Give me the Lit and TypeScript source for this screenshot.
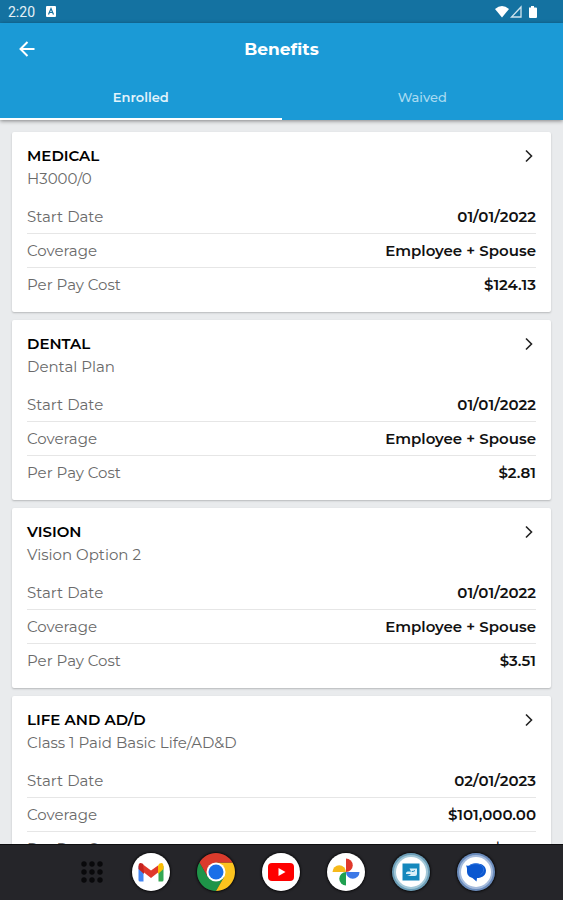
import { LitElement, html, css, svg } from "lit";
import { customElement, property, state } from "lit/decorators.js";
import { classMap } from "lit/directives/class-map.js";

interface Plan {
  title: string;
  subtitle: string;
  rows: [string, string][];
}

const plans: Plan[] = [
  {
    title: "MEDICAL",
    subtitle: "H3000/0",
    rows: [["Start Date", "01/01/2022"], ["Coverage", "Employee + Spouse"], ["Per Pay Cost", "$124.13"]],
  },
  {
    title: "DENTAL",
    subtitle: "Dental Plan",
    rows: [["Start Date", "01/01/2022"], ["Coverage", "Employee + Spouse"], ["Per Pay Cost", "$2.81"]],
  },
  {
    title: "VISION",
    subtitle: "Vision Option 2",
    rows: [["Start Date", "01/01/2022"], ["Coverage", "Employee + Spouse"], ["Per Pay Cost", "$3.51"]],
  },
  {
    title: "LIFE AND AD/D",
    subtitle: "Class 1 Paid Basic Life/AD&D",
    rows: [["Start Date", "02/01/2023"], ["Coverage", "$101,000.00"], ["Per Pay Cost", "$0.00"]],
  },
];

const apps = [
  {
    name: "Gmail",
    icon: svg`
      <circle cx="19" cy="19" r="19" fill="#fff"/>
      <path d="M6.500 13v14q0 1.500 1.500 1.500H11.500V17z" fill="#4285f4"/>
      <path d="M31.500 13v14q0 1.500-1.500 1.500H26.500V17z" fill="#34a853"/>
      <path d="M26 12.500l1.500-2q4-2 4 3V16l-5.500 5z" fill="#fbbc04"/>
      <path d="M6.500 16v-2.500q0-5 4-3l1.500 2V21z" fill="#c5221f"/>
      <path d="M11 11.500l8 6 7-5V19.500l-7 5.500-7-5.500z" fill="#e0382b"/>`,
  },
  {
    name: "Chrome",
    icon: svg`
      <path d="M2.550 9.500A19 19 0 0 0 19 38L27.230 23.750 19 28.500 10.770 23.750z" fill="#1e9448"/>
      <path d="M35.450 9.500A19 19 0 0 1 19 38L27.230 23.750 19 9.500z" fill="#fcc31e"/>
      <path d="M2.550 9.500A19 19 0 0 1 35.450 9.500H19L10.770 23.750z" fill="#db3b2c"/>
      <circle cx="19" cy="19" r="9.500" fill="#fff"/>
      <circle cx="19" cy="19" r="7.500" fill="#1a6fe8"/>`,
  },
  {
    name: "YouTube",
    icon: svg`
      <circle cx="19" cy="19" r="19" fill="#fff"/>
      <rect x="6" y="10" width="26" height="18" rx="4" fill="#fe0000"/>
      <path d="M16.500 15l7 4-7 4z" fill="#fff"/>`,
  },
  {
    name: "Photos",
    icon: svg`
      <circle cx="19" cy="19" r="19" fill="#fff"/>
      <path d="M19 5.500a6.750 6.750 0 0 1 0 13.500z" fill="#e0382b"/>
      <path d="M32.500 19a6.750 6.750 0 0 1-13.500 0z" fill="#3b78e7"/>
      <path d="M19 32.500a6.750 6.750 0 0 1 0-13.500z" fill="#1fa050"/>
      <path d="M5.500 19a6.750 6.750 0 0 1 13.500 0z" fill="#f6b91a"/>`,
  },
  {
    name: "Benefits",
    icon: svg`
      <circle cx="19" cy="19" r="19" fill="#6d9fb8"/>
      <circle cx="19" cy="19" r="17" fill="#a3c8d8"/>
      <circle cx="19" cy="19" r="15" fill="#fff"/>
      <rect x="10.500" y="10.500" width="17" height="17" fill="#1488bd"/>
      <path d="M17.500 15.500H25V21q0 2-2 2h-8q3-.5 4-2h-5q-.5-2 1.500-2.500h5q-2.500-.5-3-3z" fill="#d9eff8"/>
      <path d="M20 18.500q2 0 3-1" fill="none" stroke="#1488bd"/>`,
  },
  {
    name: "Messages",
    icon: svg`
      <circle cx="19" cy="19" r="19" fill="#6b8cbc"/>
      <circle cx="19" cy="19" r="17" fill="#a5bbdd"/>
      <circle cx="19" cy="19" r="15" fill="#fff"/>
      <path d="M9 12.500q2 .3 3.500 0C14.500 11 17 10.500 20 10.500c5 0 9 2.800 9 7.200 0 3-2 5.800-5.500 6.800-1.200.4-2.500.5-3.500.5l-.5 3.500L15.500 25c-3.500-.8-5.500-3.500-5.500-6.500 0-2.500.2-4-1-6z" fill="#0b57d0"/>
      <path d="M12.500 12.500c4-2.500 9-2 12 0s3 7-1 9" fill="none" stroke="#2f74e0"/>`,
  },
];

@customElement("plan-card")
export class PlanCard extends LitElement {
  @property({ attribute: false }) plan!: Plan;

  static styles = css`
    :host {
      display: block;
      flex: none;
    }
    .card {
      padding: 12px 15px 10px;
      background: #fff;
      border-radius: 2px;
      box-shadow: 0 1px 2px rgba(0, 0, 0, 0.22);
    }
    .head {
      display: flex;
      justify-content: space-between;
      align-items: flex-start;
      margin-bottom: 10px;
    }
    .title,
    .subtitle {
      margin: 0;
      font-size: 15px;
      line-height: 23px;
    }
    .title {
      font-weight: 600;
      color: #000;
    }
    .subtitle {
      font-weight: 400;
      color: #6a6a6a;
    }
    .open {
      display: flex;
      align-items: center;
      justify-content: center;
      width: 14px;
      height: 24px;
      padding: 0;
      border: 0;
      background: none;
      color: #222;
      cursor: pointer;
    }
    .rows {
      margin: 0;
    }
    .row {
      display: flex;
      justify-content: space-between;
      font-size: 15px;
      line-height: 33px;
      border-bottom: 1px solid #e6e6e6;
    }
    .row:last-child {
      border-color: transparent;
    }
    .label {
      font-weight: 400;
      color: #6a6a6a;
    }
    .value {
      margin: 0;
      font-weight: 600;
      color: #111;
    }
  `;

  render() {
    const { title, subtitle, rows } = this.plan;
    return html`
      <article class="card">
        <header class="head">
          <div>
            <h2 class="title">${title}</h2>
            <p class="subtitle">${subtitle}</p>
          </div>
          <button class="open" aria-label="Open ${title}">
            <svg width="10" height="14" viewBox="0 0 10 14" fill="none" stroke="currentColor" stroke-width="1.6">
              <path d="M2 1.500L7.500 7 2 12.500" />
            </svg>
          </button>
        </header>
        <dl class="rows">
          ${rows.map(
            ([label, value]) => html`
              <div class="row">
                <dt class="label">${label}</dt>
                <dd class="value">${value}</dd>
              </div>
            `
          )}
        </dl>
      </article>
    `;
  }
}

@customElement("app-root")
export class AppRoot extends LitElement {
  @state() private tab = "Enrolled";

  static styles = css`
    :host {
      display: flex;
      flex-direction: column;
      height: 100vh;
      overflow: hidden;
      background: #e9ebed;
      font-family: Montserrat, Inter, "Liberation Sans", sans-serif;
    }
    .status {
      flex: none;
      display: flex;
      align-items: center;
      justify-content: space-between;
      height: 23px;
      padding: 0 25px 0 8px;
      background: #1472a1;
      color: #e4f0f6;
      font-family: Roboto, sans-serif;
      font-size: 14px;
    }
    .group {
      display: flex;
      align-items: center;
      gap: 11px;
    }
    .bar {
      flex: none;
      position: relative;
      background: #1b9ad6;
      box-shadow: 0 1px 4px rgba(0, 0, 0, 0.45);
      color: #fff;
    }
    .top {
      display: grid;
      grid-template-columns: 40px 1fr 40px;
      align-items: center;
      height: 52px;
      padding: 0 7px;
    }
    .back {
      display: flex;
      align-items: center;
      justify-content: center;
      height: 40px;
      padding: 0;
      border: 0;
      background: none;
      color: inherit;
      cursor: pointer;
    }
    .heading {
      margin: 0;
      text-align: center;
      font-size: 17px;
      font-weight: 700;
      line-height: 24px;
    }
    .tabs {
      display: flex;
    }
    .tab {
      flex: 1;
      height: 45px;
      padding: 0;
      border: 0;
      border-bottom: 2px solid transparent;
      background: none;
      color: #a9daf1;
      font-family: inherit;
      font-size: 13px;
      font-weight: 500;
      cursor: pointer;
    }
    .tab.active {
      border-color: #fff;
      color: #e2f3fb;
      font-weight: 600;
    }
    .list {
      flex: 1;
      min-height: 0;
      display: flex;
      flex-direction: column;
      gap: 8px;
      padding: 12px;
      overflow-y: auto;
      scrollbar-width: none;
    }
    .dock {
      flex: none;
      position: relative;
      display: flex;
      align-items: center;
      justify-content: center;
      gap: 27px;
      height: 56px;
      padding-left: 11px;
      background: #252529;
      box-sizing: border-box;
      box-shadow: inset 0 1px #0e0e10;
    }
    .app {
      display: flex;
      padding: 0;
      border: 0;
      border-radius: 50%;
      background: none;
      cursor: pointer;
    }
    .round {
      box-shadow: 0 0 2px 1px #0c0c0e;
    }
  `;

  private renderTab(name: string) {
    const active = this.tab === name;
    return html`
      <button
        role="tab"
        aria-selected=${active}
        class=${classMap({ tab: true, active })}
        @click=${() => (this.tab = name)}
      >
        ${name}
      </button>
    `;
  }

  render() {
    return html`
      <div class="status">
        <div class="group">
          <span>2:20</span>
          <svg width="10" height="11" viewBox="0 0 10 11">
            <rect width="10" height="11" rx="1" fill="#fff" />
            <path d="M2.500 8.500L5 2.500l2.500 6M3.500 6.500h3" fill="none" stroke="#1472a1" stroke-width="1.2" />
          </svg>
        </div>
        <svg width="43" height="14" viewBox="0 0 43 14">
          <path d="M0 4Q7 -2 14 4L7 12.500z" fill="#fff" />
          <path d="M26 2v10H16.500z" fill="none" stroke="#cfe4ee" stroke-width="1.3" />
          <path d="M34 2.500h2V1h3v1.500h2q1 0 1 1V12q0 1-1 1h-6q-1 0-1-1z" fill="#fff" />
        </svg>
      </div>
      <header class="bar">
        <div class="top">
          <button class="back" aria-label="Back">
            <svg width="16" height="16" viewBox="0 0 16 16" fill="none" stroke="currentColor" stroke-width="2">
              <path d="M15.500 8H2M8.500 1L1.500 8l7 7" />
            </svg>
          </button>
          <h1 class="heading">Benefits</h1>
        </div>
        <div class="tabs" role="tablist">${this.renderTab("Enrolled")}${this.renderTab("Waived")}</div>
      </header>
      <main class="list">${plans.map((plan) => html`<plan-card .plan=${plan}></plan-card>`)}</main>
      <nav class="dock" aria-label="Apps">
        <button class="app" aria-label="All apps">
          <svg width="26" height="26" viewBox="0 0 26 26" fill="#09090b">
            ${[5, 13, 21].map((y) => [5, 13, 21].map((x) => svg`<circle cx=${x} cy=${y} r="2.7" />`))}
          </svg>
        </button>
        ${apps.map(
          (app) => html`
            <button class="app round" aria-label=${app.name}>
              <svg width="38" height="38" viewBox="0 0 38 38">${app.icon}</svg>
            </button>
          `
        )}
      </nav>
    `;
  }
}
